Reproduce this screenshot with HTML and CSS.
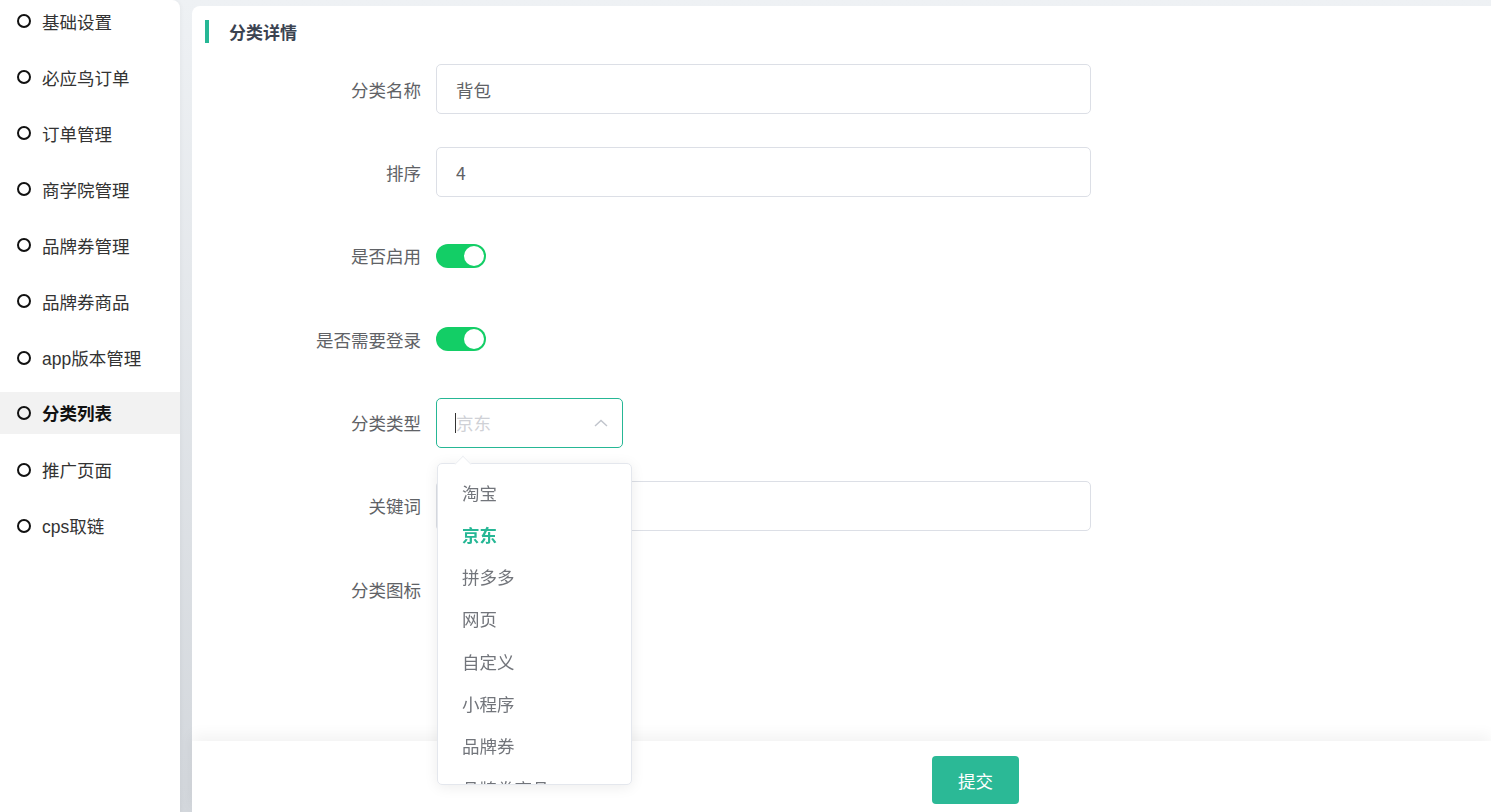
FILE: index.html
```html
<!DOCTYPE html>
<html>
    <head>
        <meta charset="utf-8">
        <link rel="stylesheet" href="styles.css">
    </head>
    <body>
        <div class="layout">
            <aside class="sidebar">
                <ul class="menu">
                    <li class="menu-item"><span class="dot"></span>基础设置</li>
                    <li class="menu-item"><span class="dot"></span>必应鸟订单</li>
                    <li class="menu-item"><span class="dot"></span>订单管理</li>
                    <li class="menu-item"><span class="dot"></span>商学院管理</li>
                    <li class="menu-item"><span class="dot"></span>品牌券管理</li>
                    <li class="menu-item"><span class="dot"></span>品牌券商品</li>
                    <li class="menu-item"><span class="dot"></span>app版本管理</li>
                    <li class="menu-item active"><span class="dot"></span>分类列表</li>
                    <li class="menu-item"><span class="dot"></span>推广页面</li>
                    <li class="menu-item"><span class="dot"></span>cps取链</li>
                </ul>
            </aside>

            <main class="content">
                <div class="card">
                    <h2 class="card-title">分类详情</h2>

                    <form class="form">
                        <div class="form-row">
                            <label class="form-label">分类名称</label>
                            <input class="text-input" type="text" value="背包">
                        </div>

                        <div class="form-row">
                            <label class="form-label">排序</label>
                            <input class="text-input" type="text" value="4">
                        </div>

                        <div class="form-row">
                            <label class="form-label">是否启用</label>
                            <span class="switch"><span class="knob"></span></span>
                        </div>

                        <div class="form-row">
                            <label class="form-label">是否需要登录</label>
                            <span class="switch"><span class="knob"></span></span>
                        </div>

                        <div class="form-row">
                            <label class="form-label">分类类型</label>
                            <div class="select">
                                <span class="caret"></span>
                                <span class="placeholder">京东</span>
                                <svg class="chevron" width="14" height="8" viewBox="0 0 14 8">
                                    <path d="M1 7 L7 1.5 L13 7" fill="none" stroke="#c0c4cc" stroke-width="1.4"/>
                                </svg>

                                <div class="dropdown">
                                    <span class="dropdown-arrow"></span>
                                    <ul class="options">
                                        <li>淘宝</li>
                                        <li class="selected">京东</li>
                                        <li>拼多多</li>
                                        <li>网页</li>
                                        <li>自定义</li>
                                        <li>小程序</li>
                                        <li>品牌券</li>
                                        <li>品牌券商品</li>
                                    </ul>
                                </div>
                            </div>
                        </div>

                        <div class="form-row">
                            <label class="form-label">关键词</label>
                            <input class="text-input" type="text" value="">
                        </div>

                        <div class="form-row">
                            <label class="form-label">分类图标</label>
                        </div>
                    </form>
                </div>

                <div class="footer">
                    <button type="button" class="submit">提交</button>
                </div>
            </main>
        </div>
    </body>
</html>
```

FILE: styles.css
```css
* {
    box-sizing: border-box;
}

body {
    margin: 0;
    height: 100vh;
    overflow: hidden;
    background: linear-gradient(#eef1f4, #d3d7dc);
    font-family: "Noto Sans CJK SC", "Liberation Sans", sans-serif;
    font-size: 17.5px;
}

.layout {
    display: flex;
    height: 100vh;
}

.sidebar {
    width: 180px;
    flex-shrink: 0;
    background-color: white;
    border-top-right-radius: 8px;
    box-shadow: 1px 0 4px rgba(0, 0, 0, 0.04);
}

.menu {
    list-style: none;
    margin: 0;
    padding: 0;
}

.menu-item {
    display: flex;
    align-items: center;
    height: 42px;
    margin-bottom: 14.1px;
    padding-left: 17px;
    color: #333;
    font-family: "Liberation Sans", "Noto Sans CJK SC", sans-serif;
}

.menu-item.active {
    margin-top: -1px;
    margin-bottom: 15.1px;
    background-color: #f2f2f2;
    font-weight: bold;
    color: #111;
}

.dot {
    width: 14px;
    height: 14px;
    border: 2.6px solid #111;
    border-radius: 50%;
    margin-right: 11px;
}

.content {
    flex: 1;
    margin-left: 12px;
    padding-top: 6px;
    position: relative;
}

.card {
    background-color: white;
    border-top-left-radius: 8px;
    height: 100%;
    padding-top: 14px;
}

.card-title {
    margin: 0 0 21px 13px;
    padding-left: 20px;
    border-left: 4px solid #26b795;
    height: 23px;
    line-height: 23px;
    font-size: 17px;
    font-weight: bold;
    color: #3b4351;
}

.form-row {
    display: flex;
    align-items: center;
    height: 50px;
    margin-bottom: 33.4px;
}

.form-label {
    width: 244px;
    padding-right: 15px;
    text-align: right;
    color: #606266;
}

.text-input {
    width: 655px;
    height: 50px;
    border: 1px solid #dcdfe6;
    border-radius: 5px;
    padding: 0 19px;
    font-family: inherit;
    font-size: 17.5px;
    color: #606266;
    outline: none;
}

.switch {
    position: relative;
    width: 50px;
    height: 24px;
    border-radius: 12px;
    background-color: #13ce66;
}

.knob {
    position: absolute;
    right: 2px;
    top: 2px;
    width: 20px;
    height: 20px;
    border-radius: 50%;
    background-color: white;
}

.select {
    position: relative;
    display: flex;
    align-items: center;
    width: 187px;
    height: 50px;
    border: 1px solid #26b795;
    border-radius: 5px;
    padding-left: 18px;
}

.caret {
    width: 1px;
    height: 20px;
    background-color: #333;
}

.placeholder {
    color: #cfd1d6;
}

.chevron {
    position: absolute;
    right: 14px;
    top: 20px;
}

.dropdown {
    position: absolute;
    left: 0;
    top: 64px;
    width: 195px;
    height: 322px;
    background-color: white;
    border: 1px solid #e4e7ed;
    border-radius: 5px;
    box-shadow: 0 2px 14px rgba(0, 0, 0, 0.08);
    z-index: 10;
}

.dropdown-arrow {
    position: absolute;
    left: 19px;
    top: -6px;
    width: 12px;
    height: 12px;
    background-color: white;
    border-left: 1px solid #eef0f3;
    border-top: 1px solid #eef0f3;
    transform: rotate(45deg);
}

.options {
    list-style: none;
    margin: 0;
    padding: 8px 0 0 0;
    height: 100%;
    overflow: hidden;
}

.options li {
    height: 42.3px;
    line-height: 42.3px;
    padding-left: 24px;
    color: #72757b;
}

.options li.selected {
    color: #26b795;
    font-weight: bold;
}

.footer {
    position: fixed;
    left: 192px;
    right: 0;
    bottom: 0;
    height: 71px;
    background-color: white;
    box-shadow: 0 -6px 14px rgba(0, 0, 0, 0.05);
    padding: 15px 0 0 740px;
    z-index: 5;
}

.submit {
    width: 87px;
    height: 48px;
    border: none;
    border-radius: 4px;
    background-color: #2bb996;
    color: white;
    font-family: inherit;
    font-size: 17.5px;
}
```
